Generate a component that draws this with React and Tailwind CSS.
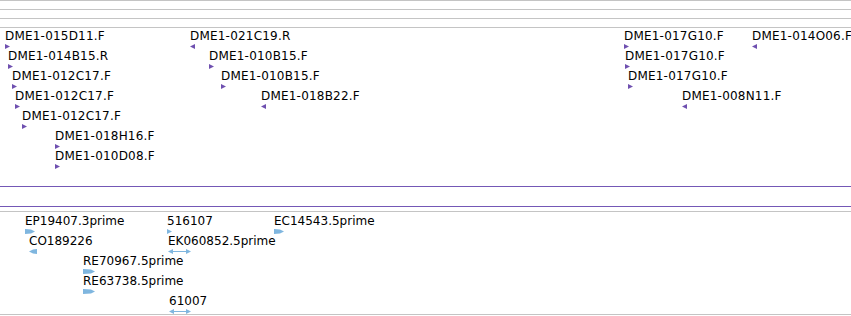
const TOP_FEATURES = [
  { x: 5, row: 0, label: 'DME1-015D11.F', dir: 'f' },
  { x: 8, row: 1, label: 'DME1-014B15.R', dir: 'f' },
  { x: 12, row: 2, label: 'DME1-012C17.F', dir: 'f' },
  { x: 15, row: 3, label: 'DME1-012C17.F', dir: 'f' },
  { x: 22, row: 4, label: 'DME1-012C17.F', dir: 'f' },
  { x: 55, row: 5, label: 'DME1-018H16.F', dir: 'f' },
  { x: 55, row: 6, label: 'DME1-010D08.F', dir: 'f' },
  { x: 190, row: 0, label: 'DME1-021C19.R', dir: 'r' },
  { x: 209, row: 1, label: 'DME1-010B15.F', dir: 'f' },
  { x: 221, row: 2, label: 'DME1-010B15.F', dir: 'f' },
  { x: 261, row: 3, label: 'DME1-018B22.F', dir: 'r' },
  { x: 624, row: 0, label: 'DME1-017G10.F', dir: 'f' },
  { x: 625, row: 1, label: 'DME1-017G10.F', dir: 'f' },
  { x: 628, row: 2, label: 'DME1-017G10.F', dir: 'f' },
  { x: 682, row: 3, label: 'DME1-008N11.F', dir: 'r' },
  { x: 752, row: 0, label: 'DME1-014O06.F', dir: 'r' },
]

const LOWER_FEATURES = [
  { x: 25, row: 0, label: 'EP19407.3prime', kind: 'block', dir: 'f', w: 10 },
  { x: 29, row: 1, label: 'CO189226', kind: 'block', dir: 'r', w: 8 },
  { x: 83, row: 2, label: 'RE70967.5prime', kind: 'block', dir: 'f', w: 12 },
  { x: 83, row: 3, label: 'RE63738.5prime', kind: 'block', dir: 'f', w: 12 },
  { x: 167, row: 0, label: '516107', kind: 'tri', dir: 'f', w: 5 },
  { x: 168, row: 1, label: 'EK060852.5prime', kind: 'both', w: 23 },
  { x: 169, row: 4, label: '61007', kind: 'both', w: 22 },
  { x: 274, row: 0, label: 'EC14543.5prime', kind: 'block', dir: 'f', w: 10 },
]

function Glyph({ kind, dir, w, color }) {
  if (kind === 'both') {
    return (
      <svg width={w} height="5" viewBox={`0 0 ${w} 5`} className="block">
        <line x1="2" y1="2.5" x2={w - 2} y2="2.5" stroke={color} strokeWidth="1" />
        <polygon points="0,2.5 5,0 5,5" fill={color} />
        <polygon points={`${w},2.5 ${w - 5},0 ${w - 5},5`} fill={color} />
      </svg>
    )
  }
  if (kind === 'block') {
    const pts = dir === 'f'
      ? `0,0 ${w - 4},0.5 ${w},2.5 ${w - 4},4.5 0,5`
      : `${w},0 4,0.5 0,2.5 4,4.5 ${w},5`
    return (
      <svg width={w} height="5" viewBox={`0 0 ${w} 5`} className="block">
        <polygon points={pts} fill={color} />
      </svg>
    )
  }
  const pts = dir === 'f' ? '0,0 5,2.5 0,5' : '5,0 0,2.5 5,5'
  return (
    <svg width="5" height="5" viewBox="0 0 5 5" className="block">
      <polygon points={pts} fill={color} />
    </svg>
  )
}

function Feature({ x, top, label, children }) {
  return (
    <div className="absolute" style={{ left: x, top }}>
      <div className="whitespace-nowrap">{label}</div>
      <div className="mt-[1px]">{children}</div>
    </div>
  )
}

export default function App() {
  return (
    <div className="w-[851px] h-[316px] bg-white overflow-hidden text-black text-[12px] leading-[14px] font-['DejaVu_Sans',sans-serif]">
      <div className="h-[9px] border-t border-[#c4c4c4]" />
      <div className="h-[9px] border-t border-[#c4c4c4]" />
      <div className="h-[9px] border-t border-[#c4c4c4]" />

      {/* EST track */}
      <div className="relative h-[159px] border-t border-[#c4c4c4] tracking-[0.2px]">
        {TOP_FEATURES.map((f, i) => (
          <Feature key={i} x={f.x} top={1 + f.row * 20} label={f.label}>
            <Glyph kind="tri" dir={f.dir} color="#6f50b0" />
          </Feature>
        ))}
      </div>

      <div className="h-[20px] border-t border-[#7458b6]" />
      <div className="h-[5px] border-t border-[#7458b6]" />

      {/* cDNA track */}
      <div className="relative h-[104px] border-t border-b border-[#c4c4c4]">
        {LOWER_FEATURES.map((f, i) => (
          <Feature key={i} x={f.x} top={2 + f.row * 20} label={f.label}>
            <Glyph kind={f.kind} dir={f.dir} w={f.w} color="#7fb6df" />
          </Feature>
        ))}
      </div>
    </div>
  )
}
